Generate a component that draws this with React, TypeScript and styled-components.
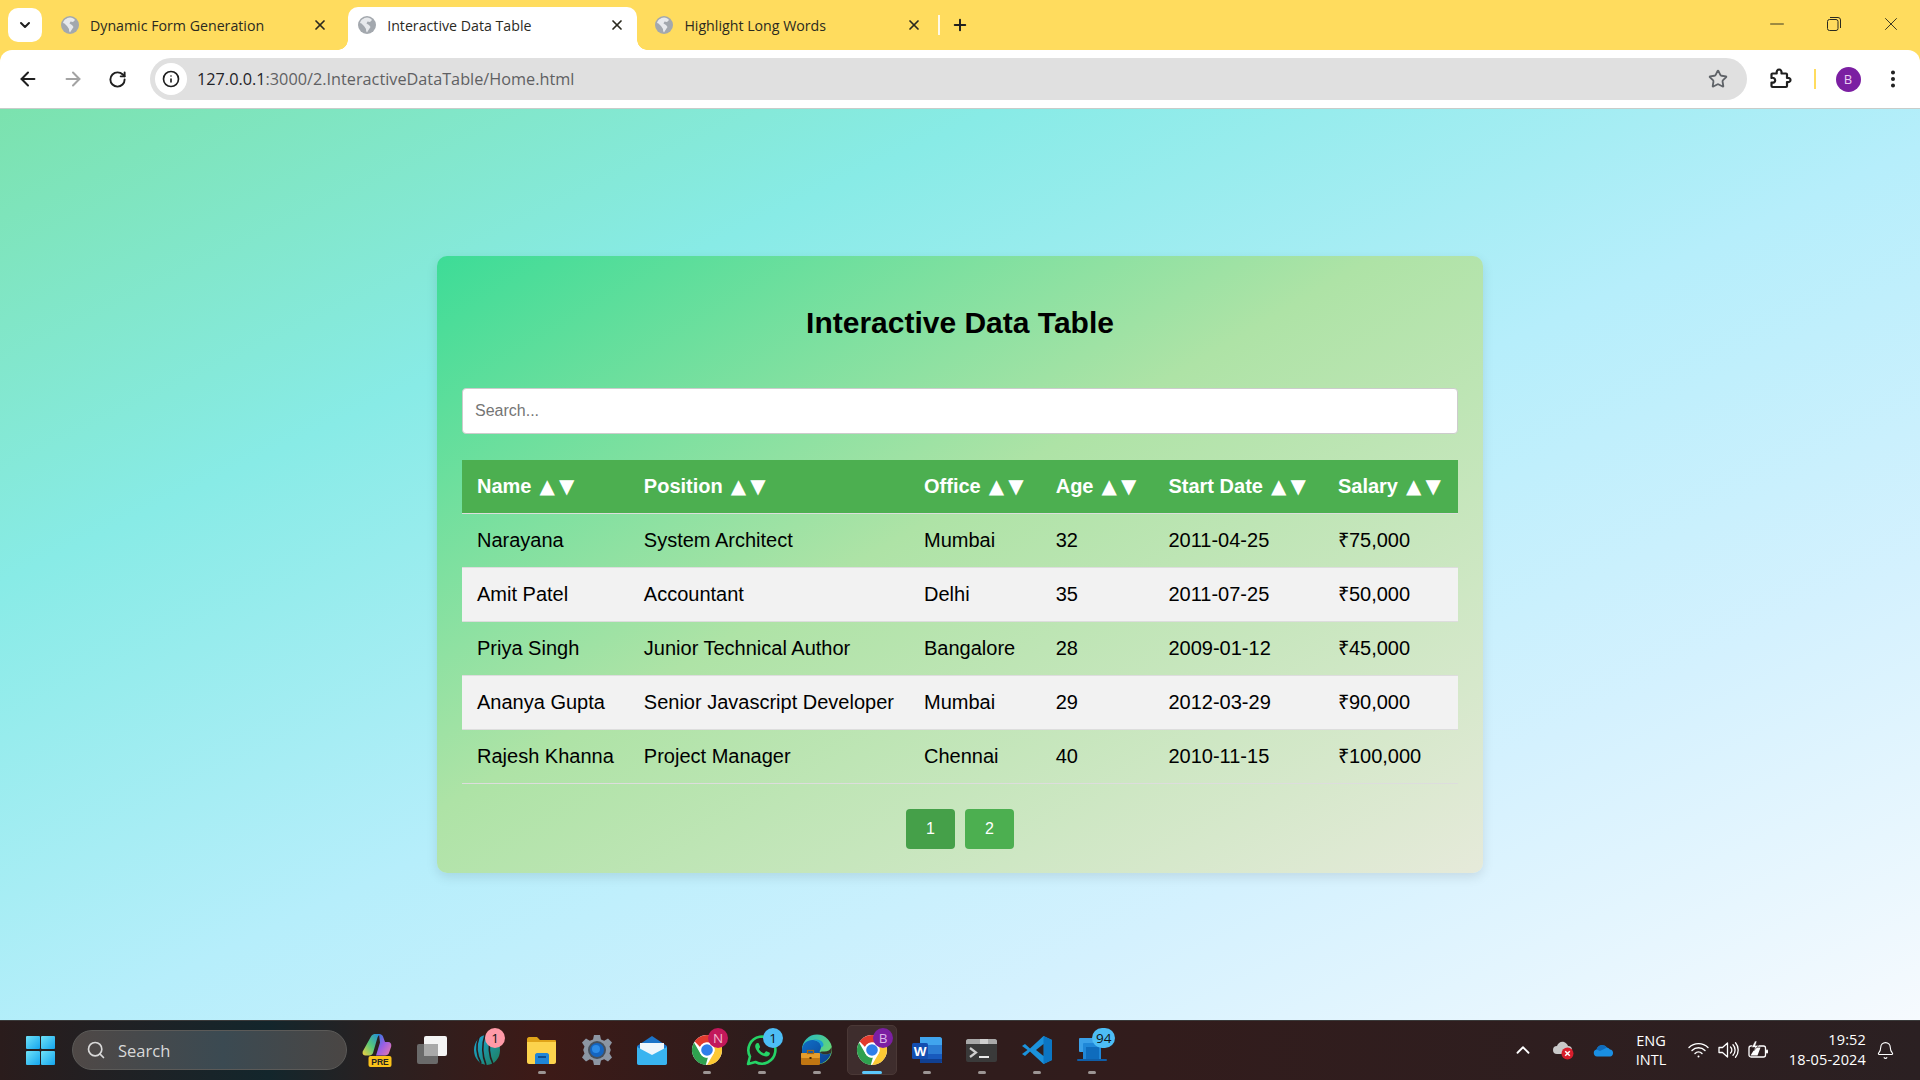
import type { ReactNode } from 'react'
import styled, { createGlobalStyle } from 'styled-components'
import {
  ArrowLeft,
  ArrowRight,
  ChevronDown,
  ChevronUp,
  Info,
  Minus,
  Plus,
  RotateCw,
  Star,
  X,
  EllipsisVertical,
  Search,
  Bell,
} from 'lucide-react'

const Global = createGlobalStyle`
  html, body { margin: 0; padding: 0; height: 100%; overflow: hidden; }
  body { font-family: "Liberation Sans", Arial, sans-serif; }
  * { box-sizing: border-box; }
`

const Screen = styled.div`
  width: 1920px;
  height: 1080px;
  display: flex;
  flex-direction: column;
  overflow: hidden;
`

/* ---------- tab strip ---------- */
const TabStrip = styled.div`
  height: 50px;
  flex: none;
  background: #ffdc5e;
  display: flex;
  align-items: flex-end;
  padding-left: 8px;
  font-family: "Open Sans", "Noto Sans", sans-serif;
`

const TabSearch = styled.div`
  width: 34px;
  height: 34px;
  margin: 0 9px 8px 0;
  border-radius: 10px;
  background: #fff;
  color: #1f1f1f;
  display: flex;
  align-items: center;
  justify-content: center;
`

const Tab = styled.div<{ $active?: boolean }>`
  position: relative;
  width: 289px;
  height: 43px;
  margin-right: 8.2px;
  padding: 0 12px 7px 10px;
  display: flex;
  align-items: center;
  border-radius: 10px 10px 0 0;
  background: ${(p) => (p.$active ? '#fff' : 'transparent')};
  color: #2b2a1f;

  ${(p) =>
    p.$active &&
    `
    &::before, &::after {
      content: '';
      position: absolute;
      bottom: 0;
      width: 10px;
      height: 10px;
    }
    &::before {
      left: -10px;
      background: radial-gradient(circle at 0 0, transparent 9.5px, #fff 10px);
    }
    &::after {
      right: -10px;
      background: radial-gradient(circle at 100% 0, transparent 9.5px, #fff 10px);
    }
  `}
`

const TabTitle = styled.span`
  flex: 1;
  margin-left: 11px;
  font-size: 14.2px;
  white-space: nowrap;
  overflow: hidden;
`

const TabDivider = styled.div`
  width: 2px;
  height: 20px;
  margin: 0 0 15px -5px;
  background: #fff;
  opacity: 0.85;
`

const NewTab = styled.div`
  width: 20px;
  height: 20px;
  margin: 0 0 15px 10px;
  color: #1f1f1f;
  display: flex;
  align-items: center;
  justify-content: center;
`

const WindowControls = styled.div`
  margin-left: auto;
  height: 50px;
  display: flex;
  align-items: center;
  padding: 0 18px 2px 0;
  gap: 39px;
  color: #2a2a20;
`

/* ---------- toolbar ---------- */
const Toolbar = styled.div`
  height: 59px;
  flex: none;
  background: #ffdc5e;
`

const ToolbarInner = styled.div`
  height: 100%;
  background: #fff;
  border-radius: 12px 12px 0 0;
  border-bottom: 1px solid #c8ccc9;
  display: flex;
  align-items: center;
`

const NavButton = styled.div<{ $w: number; $muted?: boolean }>`
  width: ${(p) => p.$w}px;
  flex: none;
  display: flex;
  justify-content: center;
  align-items: center;
  color: ${(p) => (p.$muted ? '#a3a3a3' : '#1f1f1f')};
`

const Omnibox = styled.div`
  width: 1597px;
  height: 42px;
  margin-left: 6px;
  flex: none;
  border-radius: 21px;
  background: #e0e0e0;
  display: flex;
  align-items: center;
  padding: 0 19px 0 5px;
`

const SiteInfo = styled.div`
  width: 32px;
  height: 32px;
  border-radius: 50%;
  background: #fff;
  color: #1f1f1f;
  display: flex;
  align-items: center;
  justify-content: center;
`

const UrlText = styled.div`
  margin-left: 10px;
  flex: 1;
  font-family: "Open Sans", "Noto Sans", sans-serif;
  font-size: 16.25px;
  color: #5f6063;
  white-space: nowrap;

  b {
    font-weight: 400;
    color: #1f2328;
  }
`

const ToolbarDivider = styled.div`
  width: 2px;
  height: 20px;
  flex: none;
  margin-left: -1px;
  background: #ffdc5e;
`

const Avatar = styled.div`
  width: 25px;
  height: 25px;
  margin-left: 19.5px;
  flex: none;
  border-radius: 50%;
  background: #7b1fa2;
  color: #e9cdf2;
  font-family: "Open Sans", sans-serif;
  font-size: 13px;
  display: flex;
  align-items: center;
  justify-content: center;
`

/* ---------- page ---------- */
const Page = styled.main`
  flex: 1;
  min-height: 0;
  background: linear-gradient(to bottom right, #7be2ae 0%, #88ebe6 26%, #b6eefb 52%, #d4f1fe 75%, #f6fafe 100%);
  display: flex;
  align-items: center;
  justify-content: center;
`

const Card = styled.section`
  width: 1046px;
  height: 617px;
  padding: 0 25px;
  border-radius: 10px;
  background: linear-gradient(to bottom right, #3ddc97 0%, #aee3a6 45%, #e6eada 100%);
  box-shadow: 0 4px 12px rgba(0, 0, 0, 0.1);
  color: #000;
`

const Title = styled.h1`
  margin: 0;
  padding-top: 49px;
  height: 132px;
  text-align: center;
  font-size: 30px;
  line-height: 35px;
  font-weight: 700;
`

const SearchInput = styled.input`
  display: block;
  width: 100%;
  height: 46px;
  padding: 0 12px;
  border: 1px solid #ccc;
  border-radius: 4px;
  background: #fff;
  font-family: inherit;
  font-size: 16px;

  &::placeholder {
    color: #757575;
  }
`

const Table = styled.table`
  width: 100%;
  margin-top: 26px;
  border-collapse: collapse;
  font-size: 20px;
`

const Th = styled.th`
  padding: 15px;
  background: #4caf50;
  color: #fff;
  text-align: left;
  font-weight: 700;
  line-height: 23px;
  white-space: nowrap;
  border-bottom: 1px solid #ddd;
`

const Arrows = styled.span`
  font-family: "DejaVu Sans", sans-serif;
  letter-spacing: 4.3px;
  margin: 0 -2.4px 0 2.4px;
`

const Row = styled.tr`
  &:nth-child(even) {
    background: #f2f2f2;
  }
`

const Td = styled.td`
  padding: 15px;
  line-height: 23px;
  white-space: nowrap;
  border-bottom: 1px solid #ddd;
`

const Pagination = styled.div`
  margin-top: 25px;
  display: flex;
  justify-content: center;
  gap: 10px;
`

const PageButton = styled.button<{ $current?: boolean }>`
  width: 49px;
  height: 40px;
  border: none;
  border-radius: 4px;
  background: ${(p) => (p.$current ? '#45a049' : '#4caf50')};
  color: #fff;
  font-family: inherit;
  font-size: 16px;
`

/* ---------- taskbar ---------- */
const Taskbar = styled.footer`
  height: 60px;
  flex: none;
  border-top: 1px solid #3a3a3a;
  background: linear-gradient(
    90deg,
    #2a1c1c 0%,
    #1d2226 8%,
    #13262c 14%,
    #2b2020 20%,
    #3d1a17 28%,
    #2d1c1c 40%,
    #321c1c 60%,
    #2b2022 100%
  );
  display: flex;
  align-items: center;
  padding: 0 16px 1px 26px;
  color: #fff;
  font-family: "Open Sans", "Noto Sans", sans-serif;
`

const StartIcon = styled.div`
  width: 29px;
  height: 29px;
  margin-right: 17px;
  flex: none;
  display: grid;
  grid-template-columns: 1fr 1fr;
  gap: 1.5px;

  span {
    background: linear-gradient(135deg, #6fe2f8, #14a5ee);
    border-radius: 1px;
  }
`

const TaskSearch = styled.div`
  width: 275px;
  height: 40px;
  margin-right: 2px;
  flex: none;
  border-radius: 20px;
  border: 1px solid #5b5a58;
  background: linear-gradient(90deg, #4f4846, #3b4a52 55%, #4a4644);
  display: flex;
  align-items: center;
  padding-left: 13px;
  gap: 12px;
  font-size: 16.5px;
  color: #d9d9d9;
`

const TaskIcons = styled.div`
  display: flex;
`

const TaskItem = styled.div<{ $active?: boolean }>`
  position: relative;
  width: 55px;
  height: 50px;
  display: flex;
  align-items: center;
  justify-content: center;

  ${(p) =>
    p.$active &&
    `
    &::before {
      content: '';
      position: absolute;
      left: 2.5px;
      right: 2.5px;
      top: 0;
      bottom: 0;
      border-radius: 5px;
      border: 1px solid #4a3836;
      background: rgba(255, 255, 255, 0.08);
    }
  `}

  svg {
    position: relative;
  }
`

const RunDot = styled.i<{ $active?: boolean }>`
  position: absolute;
  left: 50%;
  bottom: 1px;
  width: ${(p) => (p.$active ? 20 : 8)}px;
  height: 3px;
  margin-left: ${(p) => (p.$active ? -10 : -4)}px;
  border-radius: 2px;
  background: ${(p) => (p.$active ? '#5cc7fa' : '#9c9594')};
`

const Badge = styled.span<{ $bg: string; $color?: string; $left: number; $wide?: boolean }>`
  position: absolute;
  top: 3px;
  left: ${(p) => p.$left}px;
  min-width: 20px;
  height: 20px;
  padding: 0 ${(p) => (p.$wide ? 4 : 0)}px;
  border-radius: 10px;
  background: ${(p) => p.$bg};
  color: ${(p) => p.$color || '#111'};
  font-size: 13.5px;
  line-height: 20px;
  text-align: center;
`

const Tray = styled.div`
  margin-left: auto;
  display: flex;
  align-items: center;
  font-size: 14.5px;
`

const TrayItem = styled.div<{ $w: number }>`
  width: ${(p) => p.$w}px;
  flex: none;
  display: flex;
  align-items: center;
  justify-content: center;
`

const Lang = styled.div`
  width: 56px;
  flex: none;
  text-align: center;
  line-height: 19.5px;
`

const Clock = styled.div`
  width: 89px;
  flex: none;
  text-align: right;
  line-height: 20px;
  letter-spacing: 0.15px;
`

/* ---------- drawings ---------- */
const Globe = () => (
  <svg width="18" height="18" viewBox="0 0 18 18">
    <circle cx="9" cy="9" r="9" fill="#a3a8ae" />
    <path
      d="M9 1.5c2 .3 4 1 5 2.500l-2 2-2.500-.5-1 2 2.500 1.500 1.500 2-2 3-1.500 2.500c-.8-1-1-2-1-3.500L6 10 3.500 7.500 2 7c.6-2.800 3.500-5.200 7-5.500z"
      fill="#e7e9ec"
    />
  </svg>
)

const ChromeMark = ({ s = 32 }: { s?: number }) => {
  const seg = 'M16 1A15 15 0 0 1 29 8.500H16A7.500 7.500 0 0 0 9 13L3.700 7.500A15 15 0 0 1 16 1z'
  return (
    <svg width={s} height={s} viewBox="0 0 32 32">
      <circle cx="16" cy="16" r="15" fill="#fff" />
      <path d={seg} fill="#e33b2e" />
      <path d={seg} fill="#fcc934" transform="rotate(120 16 16)" />
      <path d={seg} fill="#2fa14f" transform="rotate(240 16 16)" />
      <circle cx="16" cy="16" r="7.500" fill="#fff" />
      <circle cx="16" cy="16" r="5.800" fill="#2f7fea" />
    </svg>
  )
}

const Copilot = () => (
  <svg width="30" height="34" viewBox="0 0 30 34">
    <defs>
      <linearGradient id="cp1" x1="0" y1="1" x2="1" y2="0">
        <stop offset="0" stopColor="#f4d13f" />
        <stop offset="0.45" stopColor="#58c878" />
        <stop offset="1" stopColor="#1b87e6" />
      </linearGradient>
      <linearGradient id="cp2" x1="0" y1="0" x2="1" y2="1">
        <stop offset="0" stopColor="#1f7fe0" />
        <stop offset="0.5" stopColor="#9c5fe4" />
        <stop offset="1" stopColor="#f07ca8" />
      </linearGradient>
    </defs>
    <path d="M9 3.500C10 1.500 12 1 13.500 1H19c-2 .5-3 2-3.500 3.500L11 20c-.5 1.500-2 2.500-3.500 2.500H3.500C1.500 22.500 0 21 .7 18.500z" fill="url(#cp1)" />
    <path d="M17 1c2 0 3.500 1 4 2.500L23 9h3c2.500 0 3.800 2 3.200 4.500L27 20c-.5 1.500-2 2.500-4 2.500h-9l4-13z" fill="url(#cp2)" />
    <rect x="6.500" y="23" width="23" height="11" rx="2" fill="#fbc21a" />
    <text x="18" y="31.500" textAnchor="middle" fontSize="8.500" fontWeight="700" fontFamily="Liberation Sans" fill="#222">PRE</text>
  </svg>
)

const TaskView = () => (
  <svg width="32" height="30" viewBox="0 0 32 30">
    <rect x="1" y="9" width="21" height="20" rx="2" fill="#6a6a6a" />
    <rect x="8" y="1" width="23" height="20" rx="2" fill="#f4f4f4" />
    <rect x="8" y="9" width="14" height="12" fill="#a9a9a9" />
  </svg>
)

const Cricket = () => (
  <svg width="28" height="34" viewBox="0 0 28 34">
    <defs>
      <linearGradient id="ck" x1="0" y1="0" x2="1" y2="1">
        <stop offset="0" stopColor="#1aa7d8" />
        <stop offset="1" stopColor="#1f7d5a" />
      </linearGradient>
    </defs>
    <ellipse cx="14" cy="17" rx="13" ry="15" fill="url(#ck)" />
    <path d="M6 4c-3 8-3 17 2 26M12 2c-3 9-3 20 1 30M18 3c-3 9-2 20 2 28" stroke="#2a1c1c" strokeWidth="1.600" fill="none" />
  </svg>
)

const Folder = () => (
  <svg width="31" height="28" viewBox="0 0 31 28">
    <path d="M1 3c0-1 1-2 2-2h8l3 3h15c1 0 1 1 1 1v3H1z" fill="#e0a419" />
    <path d="M1 6h29v20c0 1-1 2-2 2H3c-1 0-2-1-2-2z" fill="#fcd34d" />
    <path d="M9 19c0-1 1-2 2-2h10c1 0 2 1 2 2v9H9z" fill="#1f86d8" />
    <rect x="12" y="20" width="8" height="2" fill="#0b4f91" />
  </svg>
)

const Gear = () => (
  <svg width="32" height="32" viewBox="0 0 32 32">
    <path
      d="M13 1h6l1 4.500 3.200 1.300L27 4.400l4 4.200-2.500 3.800L29.800 16l-1.300 3.600 2.500 3.800-4 4.200-3.800-2.400L20 26.500 19 31h-6l-1-4.500-3.200-1.300L5 27.600l-4-4.200 2.500-3.800L2.200 16l1.300-3.600L1 8.600l4-4.200 3.800 2.400L12 5.500z"
      fill="#8c96a3"
    />
    <circle cx="16" cy="16" r="9" fill="#46505c" />
    <circle cx="16" cy="16" r="7" fill="#1565c0" />
    <circle cx="15" cy="15" r="4" fill="#2d8be6" />
  </svg>
)

const Mail = () => (
  <svg width="32" height="30" viewBox="0 0 32 30">
    <path d="M1 11L16 1l15 10v17c0 1-1 2-2 2H3c-1 0-2-1-2-2z" fill="#1b74c9" />
    <path d="M4 8h24v12L16 25 4 20z" fill="#eef6fc" />
    <path d="M1 12l15 8 15-8v16c0 1-1 2-2 2H3c-1 0-2-1-2-2z" fill="#39b4f0" />
  </svg>
)

const WhatsApp = () => (
  <svg width="32" height="32" viewBox="0 0 32 32">
    <path
      d="M2 30l2-7.500A13.500 13.500 0 1 1 9.500 28z"
      fill="none"
      stroke="#25d366"
      strokeWidth="2.600"
      strokeLinejoin="round"
    />
    <path
      d="M11.500 9c1 0 1.300.4 1.700 1.500l.8 2c.2.600 0 1-.8 2-.4.500-.3.800.2 1.500 1.200 1.500 2.400 2.500 4 3.200.6.200.9.100 1.300-.4l1-1.200c.4-.5.700-.4 1.300-.2l2.300 1.100c.6.300.7.600.5 1.500-.4 1.700-2 2.700-3.800 2.500-5-.6-9.500-4.800-10.700-9.300-.5-2 .8-4.200 2.200-4.200z"
      fill="#25d366"
    />
  </svg>
)

const Edge = () => (
  <svg width="32" height="32" viewBox="0 0 32 32">
    <defs>
      <linearGradient id="ed1" x1="0" y1="0" x2="1" y2="1">
        <stop offset="0" stopColor="#23b9c4" />
        <stop offset="1" stopColor="#7ee05a" />
      </linearGradient>
      <linearGradient id="ed2" x1="0" y1="0" x2="1" y2="1">
        <stop offset="0" stopColor="#0f6fc8" />
        <stop offset="1" stopColor="#0b3f8f" />
      </linearGradient>
    </defs>
    <circle cx="16" cy="15.500" r="15" fill="url(#ed1)" />
    <path d="M1 15.500C1.500 9 7 5.500 12 6c5 .5 8.500 3.500 8 7.500-.3 2.500-2 3.500-1 5 1.500 2 7 2.500 11 .5-1.500 6-7 11-14 11C8 30.500 .5 24 1 15.500z" fill="url(#ed2)" />
    <path d="M19 18.500c1.500 2 7 2.500 11 .5 1-2 1-4 .5-6-1 3-4 4.500-7 4.500-2 0-3.500-.5-4.500 1z" fill="#2f2020" opacity="0.9" />
    <path d="M20 13.500c.5-4-3-7-8-7.500 3-1 8-.5 10 3 1 2 .5 4-2 4.500z" fill="#1a9ad6" />
    <rect x="0" y="19" width="19" height="12" rx="1.500" fill="#c07612" />
    <rect x="0" y="19" width="19" height="5" rx="1" fill="#e59d2c" />
    <rect x="6.500" y="16.500" width="6" height="3" fill="none" stroke="#a86510" strokeWidth="1.200" />
    <rect x="8.500" y="23" width="2" height="2" fill="#4a2a05" />
  </svg>
)

const Word = () => (
  <svg width="30" height="30" viewBox="0 0 30 30">
    <path d="M8 2h20c1 0 2 1 2 2v6H8z" fill="#41a5ee" />
    <rect x="8" y="10" width="22" height="9" fill="#2b7cd3" />
    <rect x="8" y="19" width="22" height="9" fill="#185abd" />
    <path d="M8 28h20c1 0 2-.5 2-1.500V24H8z" fill="#103f91" />
    <rect x="0" y="8" width="16" height="16" rx="1.500" fill="#134eb0" />
    <text x="8" y="21" textAnchor="middle" fontSize="13.500" fontWeight="700" fontFamily="Liberation Sans" fill="#fff">W</text>
  </svg>
)

const Terminal = () => (
  <svg width="31" height="23" viewBox="0 0 31 23">
    <rect x="0" y="0" width="31" height="23" rx="2" fill="#3a3a3a" />
    <path d="M0 2c0-1 1-2 2-2h27c1 0 2 1 2 2v3H0z" fill="#a9a9a9" />
    <rect x="14" y="0" width="8" height="5" fill="#cfcfcf" />
    <path d="M4 9l6 4.500L4 18" stroke="#cfcfcf" strokeWidth="2.200" fill="none" />
    <rect x="13" y="17" width="10" height="2" fill="#e8e8e8" />
  </svg>
)

const VsCode = () => (
  <svg width="30" height="30" viewBox="0 0 30 30">
    <path d="M21.500 1L30 5v20l-8.500 4L8 16.500 3 21 0 19l5.500-4L0 11l3-2 5 4.500z" fill="#1b92dc" />
    <path d="M21.500 1L30 5v20l-8.500 4z" fill="#0b76c4" />
    <path d="M21.500 9l-7.500 6 7.500 6z" fill="#2f2020" />
  </svg>
)

const StoreApp = () => (
  <svg width="30" height="28" viewBox="0 0 30 28">
    <rect x="2" y="2" width="16" height="14" rx="1" fill="#3aa0e8" />
    <rect x="6" y="7" width="18" height="17" rx="1" fill="#1f87d8" />
    <rect x="9" y="11" width="13" height="14" fill="#0f6cbd" />
    <rect x="0" y="23" width="30" height="2" rx="1" fill="#0f5ea8" />
  </svg>
)

const Puzzle = () => (
  <svg width="22" height="22" viewBox="0 0 22 22">
    <path
      d="M2.500 5.500h4.200c-.3-2.700.8-4 2.400-4s2.700 1.300 2.400 4h4.500a1 1 0 0 1 1 1v3.500c2.300-.4 3.500.6 3.500 2s-1.200 2.400-3.500 2v4a1 1 0 0 1-1 1H2.500a1 1 0 0 1-1-1v-3.500c2.300.6 3.700-.6 3.700-2.200S3.800 9.300 1.500 9.900V6.500a1 1 0 0 1 1-1z"
      fill="none"
      stroke="#1f1f1f"
      strokeWidth="2.200"
      strokeLinejoin="round"
    />
  </svg>
)

const Restore = () => (
  <svg width="14" height="14" viewBox="0 0 14 14" fill="none" stroke="currentColor" strokeWidth="1">
    <rect x="0.500" y="2.500" width="10.500" height="11" rx="2" />
    <path d="M3 .5h8a2.500 2.500 0 0 1 2.500 2.500v8" />
  </svg>
)

const CloudError = () => (
  <svg width="22" height="20" viewBox="0 0 22 20">
    <path d="M5 14a4 4 0 0 1 0-8c1-3 4-5 7-4 2 .6 3.500 2.500 4 4a4 4 0 0 1 0 8z" fill="#c9c9c9" />
    <circle cx="15.500" cy="13.500" r="6" fill="#d81e2c" />
    <path d="M13.200 11.200l4.600 4.600M17.800 11.200l-4.600 4.600" stroke="#fff" strokeWidth="1.500" />
  </svg>
)

const OneDrive = () => (
  <svg width="21" height="14" viewBox="0 0 21 14">
    <path d="M4 13.500A3.500 3.500 0 0 1 3.500 6.600 6 6 0 0 1 14 4.500a4.500 4.500 0 0 1 3 2 3.600 3.600 0 0 1 .5 7z" fill="#1a8fe3" />
    <path d="M3.500 6.600A6 6 0 0 1 14 4.500L7 8z" fill="#0f6cbd" />
  </svg>
)

const WifiIcon = () => (
  <svg width="21" height="16" viewBox="0 0 21 16" fill="none" stroke="#fff" strokeWidth="1.400" strokeLinecap="round">
    <path d="M1 5.500a13.500 13.500 0 0 1 19 0M4 8.500a9.200 9.200 0 0 1 13 0M7 11.500a5 5 0 0 1 7 0" />
    <circle cx="10.500" cy="14.500" r="1" fill="#fff" stroke="none" />
  </svg>
)

const VolumeIcon = () => (
  <svg width="21" height="18" viewBox="0 0 21 18" fill="none" stroke="#fff" strokeWidth="1.300" strokeLinejoin="round">
    <path d="M1 6.500h3.500L9.500 2v14l-5-4.500H1z" />
    <path d="M12.500 6a4 4 0 0 1 0 6M15 3.800a7.500 7.500 0 0 1 0 10.400M17.500 1.800a11 11 0 0 1 0 14.400" strokeLinecap="round" />
  </svg>
)

const BatteryIcon = () => (
  <svg width="21" height="18" viewBox="0 0 21 18">
    <rect x="1" y="5" width="16.500" height="11" rx="2" fill="none" stroke="#fff" strokeWidth="1.300" />
    <rect x="18" y="8.500" width="2" height="4" rx="1" fill="#fff" />
    <path d="M2.500 14.500l5-8h5l-3 8z" fill="#fff" />
    <path d="M7 0L3.500 6.500H7L5.500 10l5-5.500H7.500L9 0z" fill="#fff" stroke="#2b2022" strokeWidth="0.600" />
  </svg>
)

/* ---------- data ---------- */
const tabs = [
  { title: 'Dynamic Form Generation' },
  { title: 'Interactive Data Table', active: true },
  { title: 'Highlight Long Words' },
]

const columns = ['Name', 'Position', 'Office', 'Age', 'Start Date', 'Salary']

const people = [
  ['Narayana', 'System Architect', 'Mumbai', '32', '2011-04-25', '₹75,000'],
  ['Amit Patel', 'Accountant', 'Delhi', '35', '2011-07-25', '₹50,000'],
  ['Priya Singh', 'Junior Technical Author', 'Bangalore', '28', '2009-01-12', '₹45,000'],
  ['Ananya Gupta', 'Senior Javascript Developer', 'Mumbai', '29', '2012-03-29', '₹90,000'],
  ['Rajesh Khanna', 'Project Manager', 'Chennai', '40', '2010-11-15', '₹100,000'],
]

interface TaskApp {
  icon: ReactNode
  running?: boolean
  active?: boolean
  badge?: { text: string; bg: string; left: number; color?: string; wide?: boolean }
}

const apps: TaskApp[] = [
  { icon: <Copilot /> },
  { icon: <TaskView /> },
  { icon: <Cricket />, badge: { text: '1', bg: '#ff9aa8', left: 26 } },
  { icon: <Folder />, running: true },
  { icon: <Gear /> },
  { icon: <Mail /> },
  { icon: <ChromeMark />, running: true, badge: { text: 'N', bg: '#c2185b', color: '#f3b9cf', left: 29 } },
  { icon: <WhatsApp />, running: true, badge: { text: '1', bg: '#4dbdf5', left: 29 } },
  { icon: <Edge />, running: true },
  { icon: <ChromeMark />, running: true, active: true, badge: { text: 'B', bg: '#7b1fa2', color: '#dcb6ea', left: 29 } },
  { icon: <Word />, running: true },
  { icon: <Terminal />, running: true },
  { icon: <VsCode />, running: true },
  { icon: <StoreApp />, running: true, badge: { text: '94', bg: '#4dbdf5', left: 28, wide: true } },
]

export default function App() {
  return (
    <Screen>
      <Global />
      <TabStrip>
        <TabSearch>
          <ChevronDown size={16} strokeWidth={3} />
        </TabSearch>
        {tabs.map((t) => (
          <Tab key={t.title} $active={t.active}>
            <Globe />
            <TabTitle>{t.title}</TabTitle>
            <X size={16} strokeWidth={2.6} />
          </Tab>
        ))}
        <TabDivider />
        <NewTab>
          <Plus size={18} strokeWidth={2.6} />
        </NewTab>
        <WindowControls>
          <Minus size={22} strokeWidth={1} />
          <Restore />
          <X size={22} strokeWidth={1} />
        </WindowControls>
      </TabStrip>

      <Toolbar>
        <ToolbarInner>
          <NavButton $w={56}>
            <ArrowLeft size={22} strokeWidth={2.2} />
          </NavButton>
          <NavButton $w={34} $muted>
            <ArrowRight size={22} strokeWidth={2.2} />
          </NavButton>
          <NavButton $w={54}>
            <RotateCw size={19} strokeWidth={2.4} />
          </NavButton>
          <Omnibox>
            <SiteInfo>
              <Info size={18} strokeWidth={2.2} />
            </SiteInfo>
            <UrlText>
              <b>127.0.0.1</b>:3000/2.InteractiveDataTable/Home.html
            </UrlText>
            <Star size={20} strokeWidth={2.2} color="#5f6368" />
          </Omnibox>
          <NavButton $w={68}>
            <Puzzle />
          </NavButton>
          <ToolbarDivider />
          <Avatar>B</Avatar>
          <NavButton $w={65}>
            <EllipsisVertical size={22} strokeWidth={2.4} />
          </NavButton>
        </ToolbarInner>
      </Toolbar>

      <Page>
        <Card>
          <Title>Interactive Data Table</Title>
          <SearchInput placeholder="Search..." />
          <Table>
            <thead>
              <tr>
                {columns.map((c) => (
                  <Th key={c}>
                    {c} <Arrows>▲▼</Arrows>
                  </Th>
                ))}
              </tr>
            </thead>
            <tbody>
              {people.map((row) => (
                <Row key={row[0]}>
                  {row.map((cell) => (
                    <Td key={cell}>{cell}</Td>
                  ))}
                </Row>
              ))}
            </tbody>
          </Table>
          <Pagination>
            <PageButton $current>1</PageButton>
            <PageButton>2</PageButton>
          </Pagination>
        </Card>
      </Page>

      <Taskbar>
        <StartIcon>
          <span />
          <span />
          <span />
          <span />
        </StartIcon>
        <TaskSearch>
          <Search size={20} strokeWidth={2} />
          Search
        </TaskSearch>
        <TaskIcons>
          {apps.map((a, i) => (
            <TaskItem key={i} $active={a.active}>
              {a.icon}
              {a.badge && (
                <Badge $bg={a.badge.bg} $color={a.badge.color} $left={a.badge.left} $wide={a.badge.wide}>
                  {a.badge.text}
                </Badge>
              )}
              {a.running && <RunDot $active={a.active} />}
            </TaskItem>
          ))}
        </TaskIcons>
        <Tray>
          <TrayItem $w={40}>
            <ChevronUp size={22} strokeWidth={2} />
          </TrayItem>
          <TrayItem $w={40}>
            <CloudError />
          </TrayItem>
          <TrayItem $w={40}>
            <OneDrive />
          </TrayItem>
          <Lang>
            ENG
            <br />
            INTL
          </Lang>
          <TrayItem $w={38}>
            <WifiIcon />
          </TrayItem>
          <TrayItem $w={22}>
            <VolumeIcon />
          </TrayItem>
          <TrayItem $w={38}>
            <BatteryIcon />
          </TrayItem>
          <Clock>
            19:52
            <br />
            18-05-2024
          </Clock>
          <TrayItem $w={38}>
            <Bell size={19} strokeWidth={1.4} />
          </TrayItem>
        </Tray>
      </Taskbar>
    </Screen>
  )
}
